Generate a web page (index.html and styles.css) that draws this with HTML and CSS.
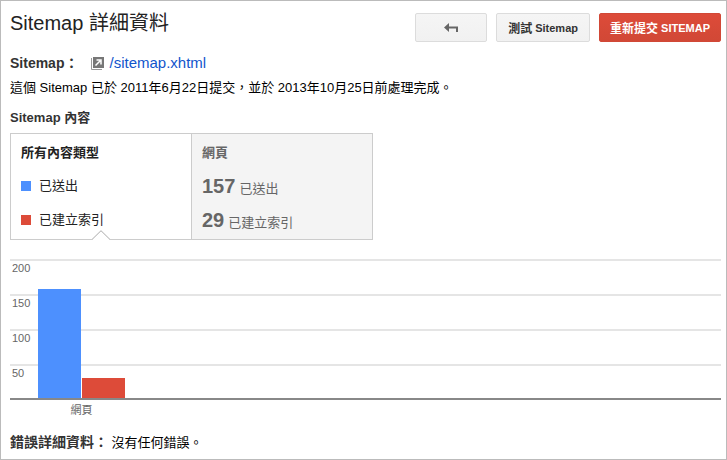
FILE: index.html
```
<!DOCTYPE html>
<html lang="zh-TW">
<head>
  <meta charset="UTF-8">
  <title>Sitemap 詳細資料</title>
  <meta name="viewport" content="width=device-width, initial-scale=1">
  <link rel="stylesheet" href="styles.css">
</head>
<body>
  <main class="page">
    <header class="page-header">
      <h1>Sitemap 詳細資料</h1>
      <div class="actions">
        <button type="button" class="btn btn-back" aria-label="返回">
          <svg width="15" height="10" viewBox="0 0 15 10"><path d="M0 4.500 5 0v3.500h9V9h-2V5.500H5V9z" fill="#666"/></svg>
        </button>
        <button type="button" class="btn"><span class="han">測試</span> Sitemap</button>
        <button type="button" class="btn btn-primary"><span class="han">重新提交</span> SITEMAP</button>
      </div>
    </header>

    <div class="sitemap-url">
      <strong>Sitemap：</strong>
      <a href="#">
        <svg width="13" height="13" viewBox="0 0 13 13">
          <path d="M.5 1v11.500H11" fill="none" stroke="#999"/>
          <path d="M2 0h11v11H2z" fill="#777"/>
          <path d="M4.500 8.500 9 4M5.500 3h4.500v4.500" fill="none" stroke="#fff" stroke-width="1.500"/>
        </svg>
        <span>/sitemap.xhtml</span>
      </a>
    </div>
    <p class="status">這個 Sitemap 已於 2011年6月22日提交，並於 2013年10月25日前處理完成。</p>

    <h2>Sitemap 內容</h2>
    <div class="types" role="tablist">
      <button type="button" class="type active" role="tab" aria-selected="true">
        <span class="type-name">所有內容類型</span>
        <span class="type-row"><i class="swatch sent"></i>已送出</span>
        <span class="type-row"><i class="swatch indexed"></i>已建立索引</span>
        <svg class="pointer" width="18" height="10" viewBox="0 0 18 10"><path d="M0 9.500 9 .7l9 8.800V10H0z" fill="#fff"/><path d="M0 9.500 9 .7l9 8.800" fill="none" stroke="#aaa"/></svg>
      </button>
      <button type="button" class="type" role="tab" aria-selected="false">
        <span class="type-name">網頁</span>
        <span class="type-row count"><b>157</b>已送出</span>
        <span class="type-row count"><b>29</b>已建立索引</span>
      </button>
    </div>

    <div class="chart">
      <div class="plot">
        <div class="grid-line">200</div>
        <div class="grid-line">150</div>
        <div class="grid-line">100</div>
        <div class="grid-line">50</div>
        <div class="bars">
          <div class="bar sent" style="height: 78.5%"></div>
          <div class="bar indexed" style="height: 14.5%"></div>
        </div>
      </div>
      <div class="axis-label">網頁</div>
    </div>

    <p class="errors"><strong>錯誤詳細資料：</strong> 沒有任何錯誤。</p>
  </main>
</body>
</html>
```

FILE: styles.css
```
* { box-sizing: border-box; }
body { margin: 0; background: #fff; color: #111; font: 13px/20px "Liberation Sans", "Noto Sans CJK TC", sans-serif; }
h1, h2, p { margin: 0; }
button { font-family: inherit; cursor: pointer; }
svg { display: block; }

.page { min-height: 100vh; padding: 12px 5px 6px 9px; border: 1px solid #bbb; }
.page-header { display: flex; justify-content: space-between; align-items: flex-start; }
h1 { font-size: 20px; line-height: 20px; font-weight: normal; color: #222; }

.actions { display: flex; gap: 9px; }
.btn { display: flex; align-items: center; justify-content: center; gap: 3px; height: 29px; min-width: 94px; padding: 0 10px; border: 1px solid #dcdcdc; border-radius: 2px; background: linear-gradient(#f5f5f5, #f1f1f1); color: #333; font-size: 11px; font-weight: bold; white-space: nowrap; }
.btn:hover { border-color: #c6c6c6; }
.btn .han { font-size: 12px; }
.btn-back { min-width: 72px; }
.btn-primary { border-color: #d14836; background: linear-gradient(#dd4b39, #d14836); color: #fff; }

.sitemap-url { display: flex; align-items: center; gap: 13px; margin-top: 11px; }
.sitemap-url strong { font-size: 14px; color: #333; }
.sitemap-url a { display: flex; align-items: center; gap: 5px; color: #15c; font-size: 15px; text-decoration: none; }
.status { margin-top: 5px; color: #000; }
h2 { margin-top: 10px; font-size: 13px; color: #333; }

.types { display: flex; max-width: 363px; margin-top: 5px; border: 1px solid #ccc; }
.type { position: relative; flex: 1; padding: 9px 10px; border: 0; background: #f4f4f4; color: #666; font-size: 13px; line-height: 20px; text-align: left; }
.type + .type { border-left: 1px solid #ccc; }
.type.active { background: #fff; color: #222; }
.type-name { display: block; font-weight: bold; }
.type-row { display: flex; align-items: center; height: 20px; margin-top: 13px; }
.type-row + .type-row { margin-top: 14px; }
.count { align-items: baseline; gap: 4px; }
.count b { font-size: 20px; }
.swatch { width: 10px; height: 10px; margin-right: 8px; }
.sent { background: #4d90fe; }
.indexed { background: #dd4b39; }
/* notch on the selected type, sits over the bottom border */
.pointer { position: absolute; left: 50%; bottom: -1px; margin-left: -9px; }

.chart { margin-top: 19px; color: #666; font-size: 11px; }
.plot { position: relative; border-bottom: 2px solid #888; }
.grid-line { height: 35px; padding-left: 2px; border-top: 2px solid #e5e5e5; line-height: 14px; }
.grid-line:nth-child(4) { height: 34px; }
.bars { position: absolute; left: 28px; bottom: 0; display: flex; align-items: flex-end; gap: 1px; height: 100%; }
.bar { width: 43px; }
.axis-label { width: 87px; margin-left: 28px; text-align: center; }

.errors { margin-top: 12px; color: #000; }
.errors strong { font-size: 14px; color: #333; }
```
